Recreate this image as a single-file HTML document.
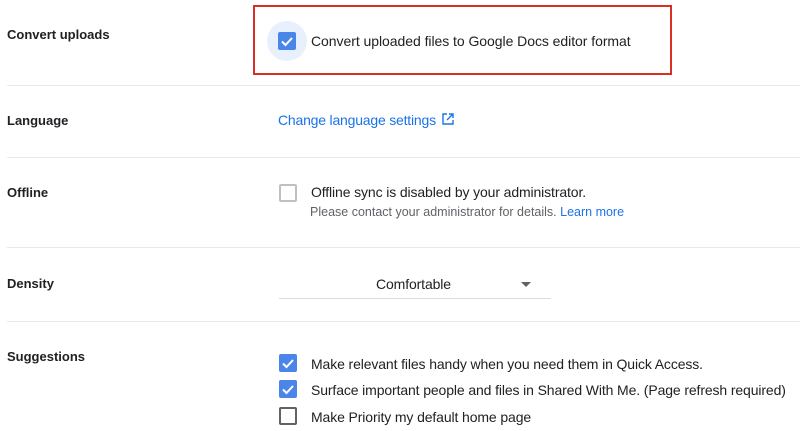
<!DOCTYPE html>
<html><head><style>
body{margin:0;width:800px;height:431px;background:#fff;font-family:"Liberation Sans",Arial,sans-serif;position:relative;overflow:hidden;color:#202124}
.a{position:absolute}
.lbl{left:7px;font-size:13px;font-weight:bold;line-height:16px}
.hr{left:7px;right:0;height:1px;background:#e8eaed}
.t{font-size:14px;line-height:18px;white-space:nowrap;letter-spacing:-0.12px}
.cb{width:14px;height:14px;border:2px solid #5f6368;border-radius:2px}
.cbc{width:18px;height:18px;background:#4a86e8;border-radius:2px}
.cbc svg{display:block}
</style></head><body>
<div class="a lbl" style="top:27px">Convert uploads</div>
<div class="a" style="left:253px;top:5px;width:415px;height:66px;border:2px solid #d93025"></div>
<div class="a" style="left:267px;top:21px;width:40px;height:40px;border-radius:50%;background:#e8f0fe"></div>
<div class="a cbc" style="left:278px;top:32px"><svg width="18" height="18"><path d="M4 9.5l3.5 3.5L14 6" stroke="#fff" stroke-width="2" fill="none"/></svg></div>
<div class="a t" style="left:311px;top:32px;letter-spacing:-0.05px">Convert uploaded files to Google Docs editor format</div>
<div class="a hr" style="top:85px"></div>

<div class="a lbl" style="top:113px">Language</div>
<div class="a t" style="left:278px;top:111px;color:#1a73e8;letter-spacing:-0.2px">Change language settings <svg width="12" height="12" style="vertical-align:0;margin-left:2px"><path d="M5 1H1v10h10V7M7 1h4v4M11 1L5 7" stroke="#1a73e8" stroke-width="1.4" fill="none"/></svg></div>
<div class="a hr" style="top:157px"></div>

<div class="a lbl" style="top:185px">Offline</div>
<div class="a cb" style="left:279px;top:184px;border-color:#bdc1c6"></div>
<div class="a t" style="left:311px;top:183px">Offline sync is disabled by your administrator.</div>
<div class="a" style="left:310px;top:205px;font-size:12.5px;color:#5f6368;white-space:nowrap">Please contact your administrator for details. <span style="color:#1a73e8">Learn more</span></div>
<div class="a hr" style="top:247px"></div>

<div class="a lbl" style="top:276px">Density</div>
<div class="a t" style="left:376px;top:275px">Comfortable</div>
<div class="a" style="left:521px;top:282px;width:0;height:0;border-left:5px solid transparent;border-right:5px solid transparent;border-top:5px solid #5f6368"></div>
<div class="a" style="left:279px;top:298px;width:272px;height:1px;background:#dadce0"></div>
<div class="a hr" style="top:321px"></div>

<div class="a lbl" style="top:349px">Suggestions</div>
<div class="a cbc" style="left:279px;top:354px"><svg width="18" height="18"><path d="M4 9.5l3.5 3.5L14 6" stroke="#fff" stroke-width="2" fill="none"/></svg></div>
<div class="a t" style="left:311px;top:355px">Make relevant files handy when you need them in Quick Access.</div>
<div class="a cbc" style="left:279px;top:380px"><svg width="18" height="18"><path d="M4 9.5l3.5 3.5L14 6" stroke="#fff" stroke-width="2" fill="none"/></svg></div>
<div class="a t" style="left:311px;top:381px">Surface important people and files in Shared With Me. (Page refresh required)</div>
<div class="a cb" style="left:279px;top:407px"></div>
<div class="a t" style="left:311px;top:408px">Make Priority my default home page</div>
</body></html>
